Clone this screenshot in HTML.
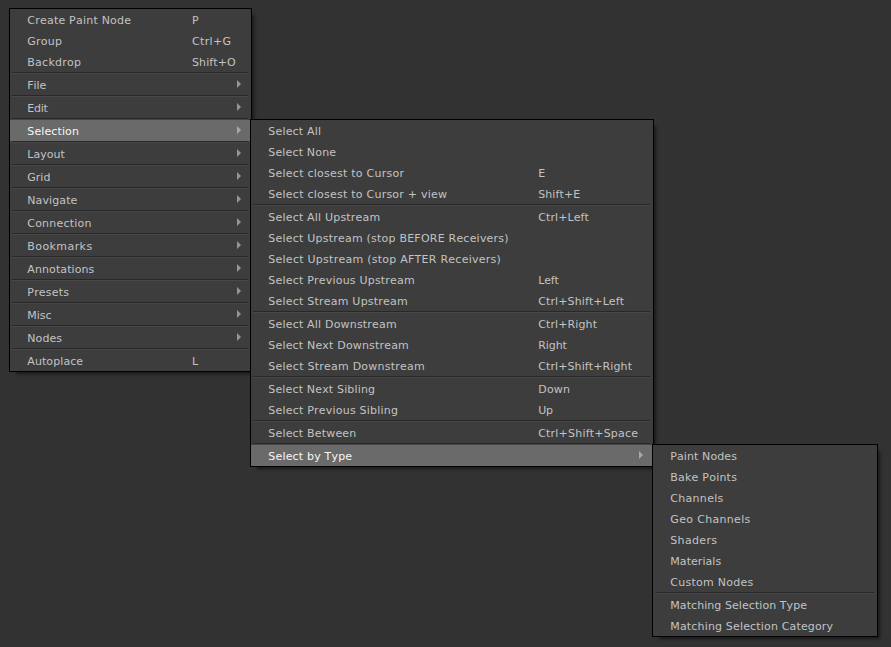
<!DOCTYPE html>
<html><head><meta charset="utf-8"><title>Menu</title>
<style>
html,body{margin:0;padding:0}
body{width:891px;height:647px;overflow:hidden;background:#323232;position:relative;
 font-family:"DejaVu Sans","Liberation Sans",sans-serif;font-size:11px;color:#c3c3c3;font-kerning:none;font-feature-settings:"kern" 0,"liga" 0;}
.menu{position:absolute;box-sizing:border-box;border:1px solid #000;background:#3d3d3d;
 box-shadow:4.5px 4.5px 3px -2.5px rgba(0,0,0,0.5);}
.item{position:relative;height:21px;line-height:21px;white-space:nowrap;}
.item .lb{position:absolute;left:17.3px;top:1px;letter-spacing:0.21px}
.item .sc{position:absolute;top:1px;letter-spacing:0.21px}
.item .ar{position:absolute;right:10px;top:6px;fill:#969696}
.item.hl{background:#6a6a6a;color:#f6f6f6}
.item.hl .ar{fill:#a8a8a8}
.sep{height:2px;margin:0 3px 0 2px;background:linear-gradient(to bottom,#282828 0,#282828 1px,#474747 1px,#474747 2px)}
</style></head>
<body>
<div class="menu" id="m1" style="left:9px;top:8px;width:243px">
<div class="item"><span class="lb" style="letter-spacing:0.219px">Create Paint Node</span><span class="sc" style="left:182.0px;">P</span></div>
<div class="item"><span class="lb" style="letter-spacing:0.21px">Group</span><span class="sc" style="left:182.0px;letter-spacing:0.35px;">Ctrl+G</span></div>
<div class="item"><span class="lb" style="letter-spacing:0.253px">Backdrop</span><span class="sc" style="left:182.0px;letter-spacing:0.087px;">Shift+O</span></div>
<div class="sep"></div>
<div class="item"><span class="lb" style="letter-spacing:-0.115px">File</span><svg class="ar" width="4" height="8" viewBox="0 0 4 8"><polygon points="0,0 4,4 0,8"/></svg></div>
<div class="sep"></div>
<div class="item"><span class="lb" style="letter-spacing:-0.225px">Edit</span><svg class="ar" width="4" height="8" viewBox="0 0 4 8"><polygon points="0,0 4,4 0,8"/></svg></div>
<div class="sep"></div>
<div class="item hl"><span class="lb" style="letter-spacing:0.11px">Selection</span><svg class="ar" width="4" height="8" viewBox="0 0 4 8"><polygon points="0,0 4,4 0,8"/></svg></div>
<div class="sep"></div>
<div class="item"><span class="lb" style="letter-spacing:0.046px">Layout</span><svg class="ar" width="4" height="8" viewBox="0 0 4 8"><polygon points="0,0 4,4 0,8"/></svg></div>
<div class="sep"></div>
<div class="item"><span class="lb" style="letter-spacing:-0.004px">Grid</span><svg class="ar" width="4" height="8" viewBox="0 0 4 8"><polygon points="0,0 4,4 0,8"/></svg></div>
<div class="sep"></div>
<div class="item"><span class="lb" style="letter-spacing:0.095px">Navigate</span><svg class="ar" width="4" height="8" viewBox="0 0 4 8"><polygon points="0,0 4,4 0,8"/></svg></div>
<div class="sep"></div>
<div class="item"><span class="lb" style="letter-spacing:0.207px">Connection</span><svg class="ar" width="4" height="8" viewBox="0 0 4 8"><polygon points="0,0 4,4 0,8"/></svg></div>
<div class="sep"></div>
<div class="item"><span class="lb" style="letter-spacing:0.42px">Bookmarks</span><svg class="ar" width="4" height="8" viewBox="0 0 4 8"><polygon points="0,0 4,4 0,8"/></svg></div>
<div class="sep"></div>
<div class="item"><span class="lb" style="letter-spacing:0.098px">Annotations</span><svg class="ar" width="4" height="8" viewBox="0 0 4 8"><polygon points="0,0 4,4 0,8"/></svg></div>
<div class="sep"></div>
<div class="item"><span class="lb" style="letter-spacing:0.209px">Presets</span><svg class="ar" width="4" height="8" viewBox="0 0 4 8"><polygon points="0,0 4,4 0,8"/></svg></div>
<div class="sep"></div>
<div class="item"><span class="lb" style="letter-spacing:-0.01px">Misc</span><svg class="ar" width="4" height="8" viewBox="0 0 4 8"><polygon points="0,0 4,4 0,8"/></svg></div>
<div class="sep"></div>
<div class="item"><span class="lb" style="letter-spacing:0.09px">Nodes</span><svg class="ar" width="4" height="8" viewBox="0 0 4 8"><polygon points="0,0 4,4 0,8"/></svg></div>
<div class="sep"></div>
<div class="item"><span class="lb" style="letter-spacing:0.088px">Autoplace</span><span class="sc" style="left:182.0px;">L</span></div>
</div>
<div class="menu" id="m2" style="left:250px;top:119px;width:404px">
<div class="item"><span class="lb" style="letter-spacing:0.176px">Select All</span></div>
<div class="item"><span class="lb" style="letter-spacing:0.162px">Select None</span></div>
<div class="item"><span class="lb" style="letter-spacing:0.245px">Select closest to Cursor</span><span class="sc" style="left:287.2px;">E</span></div>
<div class="item"><span class="lb" style="letter-spacing:0.242px">Select closest to Cursor + view</span><span class="sc" style="left:287.2px;letter-spacing:0.113px;">Shift+E</span></div>
<div class="sep"></div>
<div class="item"><span class="lb" style="letter-spacing:0.192px">Select All Upstream</span><span class="sc" style="left:287.2px;letter-spacing:0.1px;">Ctrl+Left</span></div>
<div class="item"><span class="lb" style="letter-spacing:0.219px">Select Upstream (stop BEFORE Receivers)</span></div>
<div class="item"><span class="lb" style="letter-spacing:0.257px">Select Upstream (stop AFTER Receivers)</span></div>
<div class="item"><span class="lb" style="letter-spacing:0.207px">Select Previous Upstream</span><span class="sc" style="left:287.2px;letter-spacing:-0.138px;">Left</span></div>
<div class="item"><span class="lb" style="letter-spacing:0.221px">Select Stream Upstream</span><span class="sc" style="left:287.2px;letter-spacing:0.113px;">Ctrl+Shift+Left</span></div>
<div class="sep"></div>
<div class="item"><span class="lb" style="letter-spacing:0.192px">Select All Downstream</span><span class="sc" style="left:287.2px;letter-spacing:0.113px;">Ctrl+Right</span></div>
<div class="item"><span class="lb" style="letter-spacing:0.182px">Select Next Downstream</span><span class="sc" style="left:287.2px;letter-spacing:-0.077px;">Right</span></div>
<div class="item"><span class="lb" style="letter-spacing:0.242px">Select Stream Downstream</span><span class="sc" style="left:287.2px;letter-spacing:0.111px;">Ctrl+Shift+Right</span></div>
<div class="sep"></div>
<div class="item"><span class="lb" style="letter-spacing:0.163px">Select Next Sibling</span><span class="sc" style="left:287.2px;letter-spacing:0.229px;">Down</span></div>
<div class="item"><span class="lb" style="letter-spacing:0.217px">Select Previous Sibling</span><span class="sc" style="left:287.2px;letter-spacing:-0.23px;">Up</span></div>
<div class="sep"></div>
<div class="item"><span class="lb" style="letter-spacing:0.186px">Select Between</span><span class="sc" style="left:287.2px;letter-spacing:0.208px;">Ctrl+Shift+Space</span></div>
<div class="sep"></div>
<div class="item hl"><span class="lb" style="letter-spacing:0.183px">Select by Type</span><svg class="ar" width="4" height="8" viewBox="0 0 4 8"><polygon points="0,0 4,4 0,8"/></svg></div>
</div>
<div class="menu" id="m3" style="left:652px;top:444px;width:226px">
<div class="item"><span class="lb" style="letter-spacing:0.096px">Paint Nodes</span></div>
<div class="item"><span class="lb" style="letter-spacing:0.222px">Bake Points</span></div>
<div class="item"><span class="lb" style="letter-spacing:0.299px">Channels</span></div>
<div class="item"><span class="lb" style="letter-spacing:0.33px">Geo Channels</span></div>
<div class="item"><span class="lb" style="letter-spacing:0.336px">Shaders</span></div>
<div class="item"><span class="lb" style="letter-spacing:0.052px">Materials</span></div>
<div class="item"><span class="lb" style="letter-spacing:0.268px">Custom Nodes</span></div>
<div class="sep"></div>
<div class="item"><span class="lb" style="letter-spacing:0.066px">Matching Selection Type</span></div>
<div class="item"><span class="lb" style="letter-spacing:0.164px">Matching Selection Category</span></div>
</div>
</body></html>
